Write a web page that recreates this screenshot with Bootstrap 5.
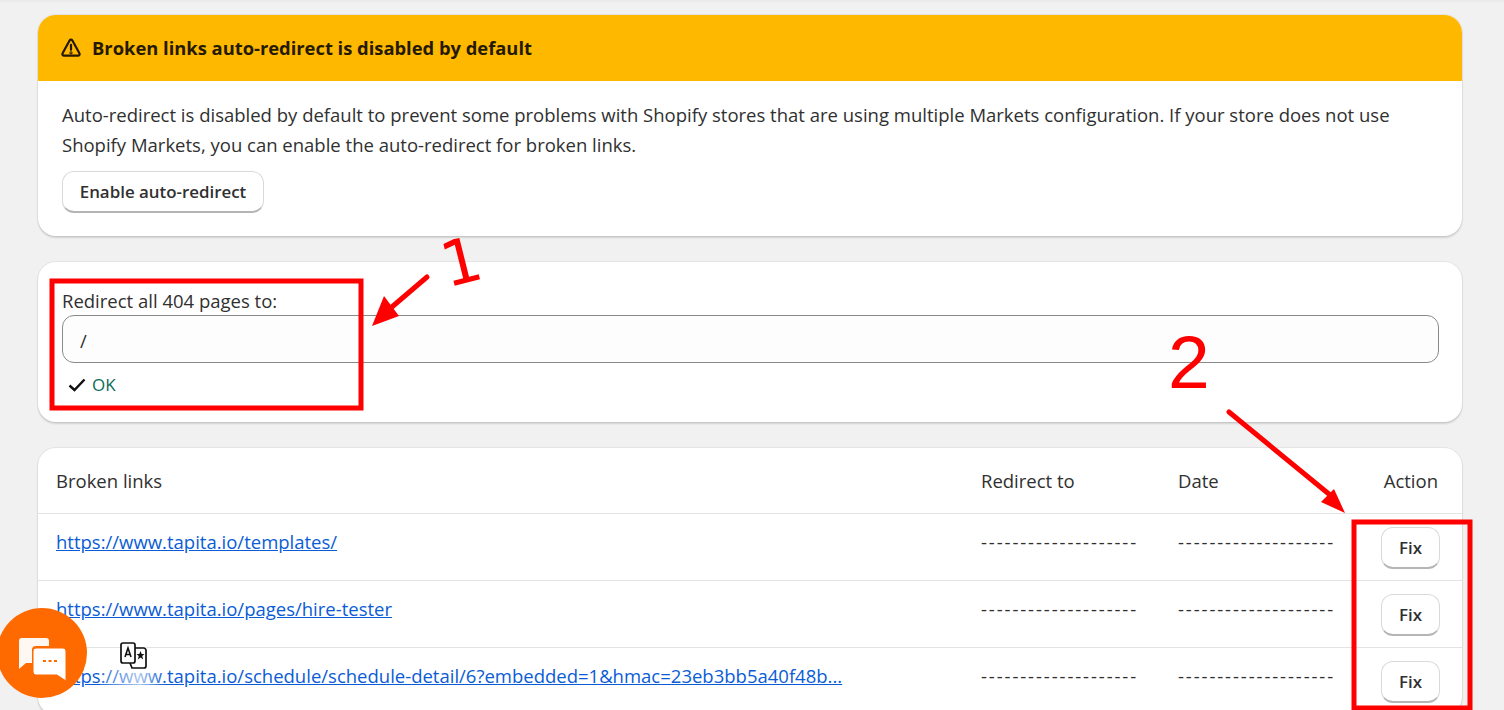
<!DOCTYPE html>
<html lang="en">
<head>
<meta charset="utf-8">
<title>Broken links</title>
<link href="https://cdn.jsdelivr.net/npm/bootstrap@5.3.0/dist/css/bootstrap.min.css" rel="stylesheet">
<style>
html,body{height:710px;overflow:hidden}
body{background:#f1f1f1;font-family:"Open Sans","Noto Sans",sans-serif;font-size:18.5px;color:#303030;border-top:2px solid #ebebeb;position:relative}
.page-wrap{padding:13px 42px 0 38px}
.panel{border:0;border-radius:18px;background:#fff;box-shadow:0 0 0 1px rgba(0,0,0,.05),0 2px 2px rgba(0,0,0,.13);margin-bottom:26px;overflow:hidden}
.panel-head{background:#ffb800;color:#251a00;height:66px;padding:0 24px;font-weight:700;font-size:18.35px;gap:11px}
.panel-head svg{margin-left:-1px}
.panel-body{padding:19px 24px 23px}
.panel-body p{line-height:30px;margin:0 0 11px}
.ghost-btn{background:#fff;border:1px solid #d9d9d9;border-bottom:2px solid #b5b5b5;border-radius:12px;font-weight:600;font-size:16.9px;color:#303030;padding:2px 0 0;line-height:1;display:inline-flex;align-items:center;justify-content:center}
.enable-btn{width:202px;height:42px}
.fix-btn{width:59px;height:42px;margin-right:-2px}
.form-wrap{padding:26px 24px 24px;height:160px}
.form-wrap label{display:block;line-height:26px;margin:0 0 1px}
.url-input{height:48px;border:1px solid #8a8a8a;border-radius:12px;background:#fdfdfd;font-size:18.5px;color:#303030;padding:3px 17px 0;width:1377px}
.ok-line{color:#0b6b57;margin-top:9px;margin-left:6px;gap:6px;line-height:26px;font-size:17px}
.link-table{margin:0;table-layout:fixed;width:100%}
.link-table td,.link-table th{border-bottom:1px solid #e3e3e3;font-weight:400;color:#303030;padding:0;vertical-align:top;background:transparent}
.link-table th{height:65px;vertical-align:middle;padding-top:1px}
.link-table td{height:67px;padding-top:14px}
.link-table a{color:#0a5cd6}
.first-col{padding-left:18px!important}
.last-col{padding-right:24px!important;text-align:right}
.link-table td.last-col{padding-top:13px}
.dash-cell{letter-spacing:1.9px;white-space:nowrap}
.chat-bubble{position:absolute;left:-3px;top:606px;width:90px;height:90px;border-radius:50%;background:#ff6a00}
.chat-glyph{position:absolute;left:18px;top:634px}
.translate-icon{position:absolute;left:120px;top:640px}
.mark-layer{position:absolute;left:0;top:-2px;pointer-events:none}
.fade-over{position:absolute;left:100px;top:662px;width:66px;height:28px;background:linear-gradient(90deg,rgba(255,255,255,.1),rgba(255,255,255,.65) 60%,rgba(255,255,255,0))}
</style>
</head>
<body>
<div class="page-wrap">
  <div class="card panel">
    <div class="panel-head d-flex align-items-center">
      <svg width="20" height="20" viewBox="0 0 20 20" fill="none" stroke="#251a00" stroke-width="2.200" stroke-linejoin="round"><path d="M8.600 2.500a1.600 1.600 0 0 1 2.800 0l7 12.800a1.600 1.600 0 0 1-1.400 2.400H3a1.600 1.600 0 0 1-1.400-2.400z"/><path d="M10 6.800v5" stroke-linecap="round"/><circle cx="10" cy="14.800" r=".5"/></svg>
      <span>Broken links auto-redirect is disabled by default</span>
    </div>
    <div class="panel-body">
      <p>Auto-redirect is disabled by default to prevent some problems with Shopify stores that are using multiple Markets configuration. If your store does not use Shopify Markets, you can enable the auto-redirect for broken links.</p>
      <button type="button" class="btn ghost-btn enable-btn">Enable auto-redirect</button>
    </div>
  </div>

  <div class="card panel">
    <div class="form-wrap">
      <label for="to">Redirect all 404 pages to:</label>
      <input id="to" class="form-control url-input" value="/">
      <div class="ok-line d-flex align-items-center">
        <svg width="18" height="14" viewBox="0 0 18 14" fill="none" stroke="#111" stroke-width="2.400"><path d="M1.500 7.500 6.500 12 16.500 1.500"/></svg>
        <span>OK</span>
      </div>
    </div>
  </div>

  <div class="card panel">
    <table class="table link-table">
      <colgroup><col style="width:943px"><col style="width:197px"><col style="width:170px"><col></colgroup>
      <thead><tr><th class="first-col">Broken links</th><th>Redirect to</th><th>Date</th><th class="last-col">Action</th></tr></thead>
      <tbody>
        <tr><td class="first-col"><a href="#">https://www.tapita.io/templates/</a></td><td class="dash-cell">--------------------</td><td class="dash-cell">--------------------</td><td class="last-col"><button type="button" class="btn ghost-btn fix-btn">Fix</button></td></tr>
        <tr><td class="first-col"><a href="#">https://www.tapita.io/pages/hire-tester</a></td><td class="dash-cell">--------------------</td><td class="dash-cell">--------------------</td><td class="last-col"><button type="button" class="btn ghost-btn fix-btn">Fix</button></td></tr>
        <tr><td class="first-col"><a href="#">https://www.tapita.io/schedule/schedule-detail/6?embedded=1&amp;hmac=23eb3bb5a40f48b...</a></td><td class="dash-cell">--------------------</td><td class="dash-cell">--------------------</td><td class="last-col"><button type="button" class="btn ghost-btn fix-btn">Fix</button></td></tr>
      </tbody>
    </table>
  </div>
</div>

<div class="fade-over"></div>

<svg class="mark-layer" width="1504" height="710" viewBox="0 0 1504 710" fill="none">
  <rect x="52" y="281" width="309" height="127" stroke="#f00" stroke-width="5"/>
  <rect x="1354" y="522" width="116" height="186" stroke="#f00" stroke-width="5"/>
  <path d="M427 277 386 312" stroke="#f00" stroke-width="5" stroke-linecap="round"/>
  <path d="M372 326 384 296 399 316z" fill="#f00"/>
  <path d="M1229 412 1335 499" stroke="#f00" stroke-width="5" stroke-linecap="round"/>
  <path d="M1345 513 1321 502 1334 489z" fill="#f00"/>
  <text x="441" y="283" transform="rotate(-14 462 260)" fill="#f00" font-family="DejaVu Sans" font-size="62">1</text>
  <text x="1168" y="388" fill="#f00" font-family="Liberation Sans" font-size="75">2</text>
</svg>

<div class="chat-bubble"></div>
<svg class="chat-glyph" width="50" height="46" viewBox="0 0 50 46">
  <path d="M3 2H28a3 3 0 0 1 3 3V10H18a4 4 0 0 0-4 4V27H8L1 33V5A3 3 0 0 1 3 2z" fill="#fff" opacity=".95"/>
  <path d="M18 12H45a3 3 0 0 1 3 3V45L39 39H18a3 3 0 0 1-3-3V15a3 3 0 0 1 3-3z" fill="#fff" stroke="#ff6a00" stroke-width="1"/>
  <rect x="25" y="24" width="3" height="2" fill="#ff6a00"/><rect x="30.500" y="24" width="3" height="2" fill="#ff6a00"/><rect x="36" y="24" width="3" height="2" fill="#ff6a00"/>
</svg>
<svg class="translate-icon" width="28" height="28" viewBox="0 0 28 28" fill="none" stroke="#111" stroke-width="1.700">
  <path d="M13 6H24a2.500 2.500 0 0 1 2 2V24a2 2 0 0 1-2 2H12l-2-5" fill="#fff"/>
  <rect x="1" y="1" width="14" height="20" rx="2" fill="#fff"/>
  <path d="M5 15 8 6l3 9M6 12.500h4" stroke-width="1.600"/>
  <path d="M20.500 9l-1.200 3h-2.800l2.300 2-1 3.500 2.700-2 2.700 2-1-3.500 2.300-2h-2.800z" fill="#111" stroke="none"/>
</svg>
<script src="https://cdn.jsdelivr.net/npm/bootstrap@5.3.0/dist/js/bootstrap.bundle.min.js"></script>
</body>
</html>
